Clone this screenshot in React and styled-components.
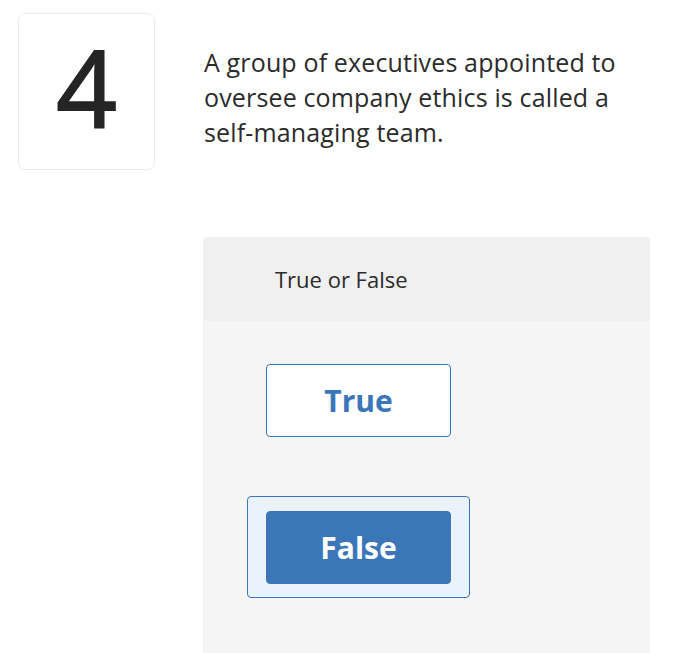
import styled, { createGlobalStyle } from "styled-components";

const GlobalStyle = createGlobalStyle`
  html, body {
    margin: 0;
    padding: 0;
    background: #ffffff;
  }
  body {
    font-family: "Open Sans", "Lato", sans-serif;
    color: #2b2b2b;
  }
`;

const Page = styled.div`
  width: 700px;
  height: 653px;
  overflow: hidden;
  box-sizing: border-box;
  padding: 13px 0 0 18px;
`;

const QuestionRow = styled.div`
  display: flex;
  align-items: flex-start;
  gap: 49px;
`;

const NumberCard = styled.div`
  width: 137px;
  height: 157px;
  box-sizing: border-box;
  border: 1px solid #ebebeb;
  border-radius: 7px;
  display: flex;
  align-items: center;
  justify-content: center;
  font-size: 106px;
  font-weight: 400;
  color: #252525;
  -webkit-text-stroke: 2px #252525;
  line-height: 1;
  padding-bottom: 10px;
`;

const Prompt = styled.p`
  margin: 0;
  padding-top: 32px;
  width: 440px;
  font-size: 25px;
  line-height: 35px;
  letter-spacing: 0.15px;
  color: #2b2b2b;
`;

const NoBreak = styled.span`
  white-space: nowrap;
`;

const Panel = styled.div`
  margin: 67px 0 0 185px;
  width: 447px;
  border-radius: 4px 4px 0 0;
  overflow: hidden;
  background: #f5f5f5;
`;

const PanelHeader = styled.div`
  background: #f0f0f0;
  height: 84px;
  box-sizing: border-box;
  padding: 27px 0 0 72px;
  font-size: 22px;
  color: #2b2b2b;
`;

const Choices = styled.div`
  display: flex;
  flex-direction: column;
  align-items: flex-start;
  padding: 43px 0 80px 63px;
  gap: 59px;
`;

const Selected = styled.div`
  padding: 14px 18px 13px;
  border: 1px solid #3a76b8;
  border-radius: 4px;
  background: #eaf2fb;
  margin-left: -19px;
`;

const Choice = styled.button`
  width: 185px;
  height: 73px;
  box-sizing: border-box;
  border: 1.5px solid #3a76b8;
  border-radius: 4px;
  background: ${({ $active }) => ($active ? "#3a76b8" : "#ffffff")};
  color: ${({ $active }) => ($active ? "#ffffff" : "#3a76b8")};
  font-family: "Open Sans", sans-serif;
  font-size: 30px;
  font-weight: 700;
  cursor: pointer;
  padding: 0;
`;

export default function App() {
  return (
    <>
      <GlobalStyle />
      <Page>
        <QuestionRow>
          <NumberCard>4</NumberCard>
          <Prompt>
            A group of executives appointed to oversee company ethics is called
            a <NoBreak>self-managing</NoBreak> team.
          </Prompt>
        </QuestionRow>
        <Panel>
          <PanelHeader>True or False</PanelHeader>
          <Choices>
            <Choice>True</Choice>
            <Selected>
              <Choice $active>False</Choice>
            </Selected>
          </Choices>
        </Panel>
      </Page>
    </>
  );
}
